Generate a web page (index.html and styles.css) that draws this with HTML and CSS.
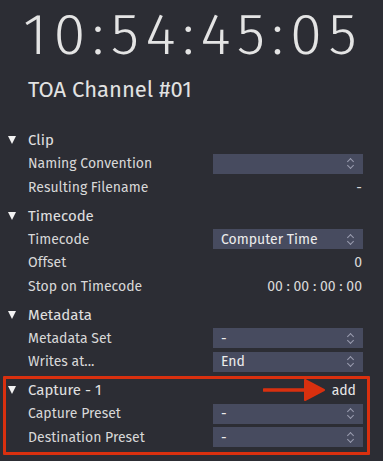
FILE: index.html
```html
<!DOCTYPE html>
<html lang="en">
<head>
  <meta charset="UTF-8" />
  <title>TOA Channel</title>
  <link rel="stylesheet" href="styles.css">
</head>
<body>
  <div class="panel">
    <div class="clock">10:54:45:05</div>
    <div class="channel">TOA Channel #01</div>

    <div class="section">
      <div class="section-head"><span class="caret"></span>Clip</div>
      <div class="row">
        <span class="label">Naming Convention</span>
        <div class="select"><span></span><i class="spin"></i></div>
      </div>
      <div class="row">
        <span class="label">Resulting Filename</span>
        <span class="value">-</span>
      </div>
    </div>

    <div class="section">
      <div class="section-head"><span class="caret"></span>Timecode</div>
      <div class="row">
        <span class="label">Timecode</span>
        <div class="select"><span>Computer Time</span><i class="spin"></i></div>
      </div>
      <div class="row">
        <span class="label">Offset</span>
        <span class="value">0</span>
      </div>
      <div class="row">
        <span class="label">Stop on Timecode</span>
        <span class="value">00 : 00 : 00 : 00</span>
      </div>
    </div>

    <div class="section">
      <div class="section-head"><span class="caret"></span>Metadata</div>
      <div class="row">
        <span class="label">Metadata Set</span>
        <div class="select"><span>-</span><i class="spin"></i></div>
      </div>
      <div class="row">
        <span class="label">Writes at...</span>
        <div class="select"><span>End</span><i class="spin"></i></div>
      </div>
    </div>

    <div class="section capture">
      <div class="section-head">
        <span class="caret"></span>Capture - 1
        <span class="add">add</span>
      </div>
      <div class="row">
        <span class="label">Capture Preset</span>
        <div class="select"><span>-</span><i class="spin"></i></div>
      </div>
      <div class="row">
        <span class="label">Destination Preset</span>
        <div class="select"><span>-</span><i class="spin"></i></div>
      </div>
      <div class="mark"></div>
      <svg class="arrow" width="62" height="22" viewBox="0 0 62 22">
        <path d="M1 11 L46 11" stroke="#d9300f" stroke-width="3.5" stroke-linecap="round"/>
        <path d="M42 1 L61 11 L42 21 Z" fill="#d9300f" stroke="#d9300f" stroke-width="2" stroke-linejoin="round"/>
      </svg>
    </div>
  </div>
</body>
</html>
```

FILE: styles.css
```css
html, body {
  margin: 0;
  background: #2c2d34;
}

body {
  font-family: 'Fira Sans', 'Open Sans', sans-serif;
  color: #dcdcdc;
  width: 383px;
  height: 461px;
  overflow: hidden;
}

.panel {
  padding: 0 21px 0 0;
}

.clock {
  font-size: 58px;
  font-weight: 300;
  line-height: 70px;
  padding-left: 23px;
  color: #e4e4e4;
  letter-spacing: 6.6px;
  white-space: nowrap;
}

.channel {
  font-size: 22px;
  line-height: 30px;
  padding-left: 28px;
  margin-top: 5px;
  color: #e2e2e2;
  margin-bottom: 23px;
}

.section {
  margin-bottom: 4.5px;
}

.section-head {
  display: flex;
  align-items: center;
  height: 24px;
  font-size: 15px;
  color: #e0e0e0;
}

.caret {
  width: 28px;
  display: flex;
  justify-content: center;
  padding-right: 4px;
  box-sizing: border-box;
}

.caret::before {
  content: "";
  border-left: 4.5px solid transparent;
  border-right: 4.5px solid transparent;
  border-top: 8px solid #f2f2f2;
}

.row {
  display: flex;
  align-items: center;
  justify-content: space-between;
  height: 23.5px;
  padding-left: 28px;
  font-size: 14px;
}

.label {
  color: #d8d8d8;
}

.value {
  color: #d8d8d8;
}

.select {
  width: 150px;
  height: 20px;
  background: #474b5f;
  display: flex;
  align-items: center;
  justify-content: space-between;
  padding: 0 8px;
  box-sizing: border-box;
  color: #ececec;
  margin-right: -1px;
}

.spin {
  width: 8px;
  height: 13px;
  position: relative;
}

.spin::before,
.spin::after {
  content: "";
  position: absolute;
  left: 1px;
  width: 4px;
  height: 4px;
  border-left: 1.3px solid #9a9db0;
  border-top: 1.3px solid #9a9db0;
}

.spin::before {
  top: 2px;
  transform: rotate(45deg);
}

.spin::after {
  bottom: 2px;
  transform: rotate(-135deg);
}

.capture {
  position: relative;
}

.add {
  margin-left: auto;
  padding-right: 6px;
  font-size: 14px;
  color: #e8e8e8;
}

.mark {
  position: absolute;
  left: 3px;
  top: -2px;
  width: 361px;
  height: 73px;
  border: 3px solid #d9300f;
  border-radius: 1px;
}

.arrow {
  position: absolute;
  left: 263px;
  top: 1px;
}
```
